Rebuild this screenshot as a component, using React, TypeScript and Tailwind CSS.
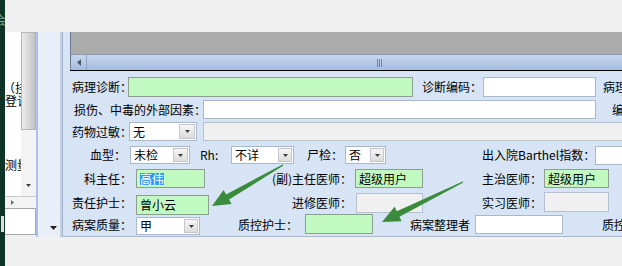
import type { ReactNode } from 'react';

type Tone = 'green' | 'white' | 'gray';

const toneCls: Record<Tone, string> = {
  green: 'bg-[#c1fac1] border-[#8d9e8d]',
  white: 'bg-white border-[#a9b9cd]',
  gray: 'bg-[#f0f0f0] border-[#b4c0cf]',
};

const Lbl = ({ c = '', children }: { c?: string; children: ReactNode }) => (
  <div className={`flex h-full shrink-0 items-center whitespace-nowrap ${c}`}>{children}</div>
);

const Field = ({ c, tone = 'white', children }: { c: string; tone?: Tone; children?: ReactNode }) => (
  <div className={`flex shrink-0 items-center border pl-[3px] whitespace-nowrap ${toneCls[tone]} ${c}`}>{children}</div>
);

const Combo = ({ c, value, btn = 'w-[15px]' }: { c: string; value: string; btn?: string }) => (
  <div className={`flex shrink-0 items-stretch border border-[#a9b9cd] bg-white ${c}`}>
    <div className="flex flex-1 items-center pl-[3px]">{value}</div>
    <div className={`my-[1px] mr-[1px] flex items-center justify-center border border-[#c4c8ce] bg-linear-to-b from-[#f6f6f6] to-[#dcdcdc] ${btn}`}>
      <svg width="5" height="3" viewBox="0 0 5 3">
        <path d="M0 0h5L2.5 3z" fill="#3c3c3c" />
      </svg>
    </div>
  </div>
);

const LeftPanel = () => (
  <div className="flex w-[31px] shrink-0 flex-col">
    <div className="flex h-[164px]">
      <div className="w-[16px] overflow-hidden bg-white leading-[13px]">
        <div className="mt-[49px] -ml-[2px] whitespace-nowrap">（挂</div>
        <div className="whitespace-nowrap">登记</div>
        <div className="mt-[51px] whitespace-nowrap">测量</div>
      </div>
      <div className="flex w-[15px] flex-col bg-[#f3f3f3]">
        <div className="h-[98px] border border-[#b5b5b5] bg-linear-to-r from-[#ececec] to-[#c2c2c2]" />
        <div className="flex-1" />
        <div className="flex h-[12px] items-start justify-center pb-[6px]">
          <svg width="5" height="3" viewBox="0 0 5 3">
            <path d="M0 0h5L2.5 3z" fill="#3c3c3c" />
          </svg>
        </div>
      </div>
    </div>
    <div className="flex h-[12px] items-center border-t border-[#c8c8c8] bg-[#f3f3f3] pl-[6px]">
      <svg width="3" height="5" viewBox="0 0 3 5">
        <path d="M0 0v5L3 2.5z" fill="#6a6a6a" />
      </svg>
    </div>
    <div className="h-[27px] border-t border-r border-b border-[#a8a8a8] bg-white" />
  </div>
);

const Form = () => (
  <div className="flex flex-1 flex-col border-b border-[#a7b7cc]">
    <div className="mt-[6px] flex h-[20px]">
      <Lbl c="ml-[9px] w-[56px]">病理诊断：</Lbl>
      <Field tone="green" c="h-[20px] w-[285px]" />
      <Lbl c="ml-[9px] w-[61px]">诊断编码：</Lbl>
      <Field c="h-[20px] w-[113px]" />
      <Lbl c="ml-[7px]">病理号：</Lbl>
    </div>

    <div className="mt-[3px] flex h-[19px]">
      <Lbl c="ml-[11px] w-[129px]">损伤、中毒的外部因素：</Lbl>
      <Field c="h-[19px] w-[393px]" />
      <Lbl c="ml-[16px]">编码：</Lbl>
    </div>

    <div className="mt-[3px] flex h-[19px]">
      <Lbl c="ml-[9px] w-[57px]">药物过敏：</Lbl>
      <Combo c="h-[19px] w-[68px]" value="无" btn="w-[16px]" />
      <Field tone="gray" c="ml-[6px] h-[19px] w-[430px]" />
    </div>

    <div className="mt-[5px] flex h-[18px]">
      <Lbl c="ml-[27px] w-[40px]">血型：</Lbl>
      <Combo c="h-[18px] w-[60px]" value="未检" />
      <Lbl c="ml-[10px] w-[31px]">Rh:</Lbl>
      <Combo c="h-[18px] w-[63px]" value="不详" btn="w-[14px]" />
      <Lbl c="ml-[13px] w-[38px]">尸检：</Lbl>
      <Combo c="h-[18px] w-[41px]" value="否" btn="w-[14px]" />
      <Lbl c="ml-[96px] w-[113px]">出入院Barthel指数：</Lbl>
      <Field c="h-[19px] w-[40px]" />
    </div>

    <div className="mt-[5px] flex h-[19px]">
      <Lbl c="ml-[21px] w-[52px]">科主任：</Lbl>
      <Field tone="green" c="h-[19px] w-[69px]">
        <span className="bg-[#3399ff] text-white">高伟</span>
      </Field>
      <Lbl c="ml-[67px] w-[83px]">(副)主任医师：</Lbl>
      <Field tone="green" c="h-[19px] w-[68px]">超级用户</Field>
      <Lbl c="ml-[59px] w-[62px]">主治医师：</Lbl>
      <Field tone="green" c="h-[19px] w-[65px]">超级用户</Field>
    </div>

    <div className="mt-[4px] flex h-[22px] items-start">
      <Lbl c="ml-[9px] w-[64px]">责任护士：</Lbl>
      <Field tone="green" c="mt-[3px] h-[20px] w-[73px]">曾小云</Field>
      <Lbl c="ml-[83px] w-[64px]">进修医师：</Lbl>
      <Field tone="gray" c="mt-[1px] h-[20px] w-[67px]" />
      <Lbl c="ml-[59px] w-[62px]">实习医师：</Lbl>
      <Field tone="gray" c="h-[20px] w-[65px]" />
    </div>

    <div className="flex h-[21px] items-start">
      <Lbl c="ml-[9px] w-[64px]">病案质量：</Lbl>
      <Combo c="mt-[3px] h-[18px] w-[64px]" value="甲" btn="w-[14px]" />
      <Lbl c="ml-[38px] w-[67px]">质控护士：</Lbl>
      <Field tone="green" c="h-[20px] w-[68px]" />
      <Lbl c="ml-[37px] w-[65px]">病案整理者</Lbl>
      <Field c="mt-[1px] h-[19px] w-[88px]" />
      <Lbl c="ml-[39px]">质控医师：</Lbl>
    </div>
  </div>
);

export default function App() {
  return (
    <div className="relative flex h-[266px] w-[622px] overflow-hidden bg-[#f0f0f0] font-['Noto_Sans_CJK_SC',sans-serif] text-[12px] leading-none text-black">
      {/* left dark strip */}
      <div className="flex w-[5px] shrink-0 flex-col overflow-hidden bg-[#0d3426]">
        <div className="mt-[14px] -ml-[6px] text-[12px] text-[#7fa595]">会</div>
        <div className="mt-[190px] ml-[1px] h-[16px] w-[3px] bg-[#dcdcdc]" />
      </div>

      <div className="flex flex-1 flex-col">
        <div className="h-[32px] shrink-0" />

        <div className="flex h-[205px] shrink-0">
          <LeftPanel />

          <div className="flex w-[26px] shrink-0 flex-col items-end justify-end border-r-2 border-l-2 border-r-[#c5cedb] border-l-[#a9c1e6] bg-[#e9eff9] pr-[3px] pb-[7px]">
            <svg width="7" height="4" viewBox="0 0 7 4">
              <path d="M0 0h7L3.5 4z" fill="#1e1e1e" />
            </svg>
          </div>

          <div className="flex flex-1 flex-col overflow-hidden border-l border-[#a0b4d0] bg-[#d7e4f5]">
            <div className="ml-[7px] flex h-[38px] flex-col border-l border-[#6a7a8c]">
              <div className="h-[22px] bg-[#ababab]" />
              <div className="flex h-[16px] items-stretch border-t border-[#8e9aab] bg-linear-to-b from-[#c6d6ee] to-[#a6bddd]">
                <div className="flex w-[16px] items-center justify-center border-r border-[#8ea4c4]">
                  <svg width="4" height="7" viewBox="0 0 4 7">
                    <path d="M4 0v7L0 3.5z" fill="#4f5a68" />
                  </svg>
                </div>
                <div className="ml-[290px] flex items-center gap-[1px]">
                  <div className="h-[8px] w-px bg-[#6f86a8]" />
                  <div className="h-[8px] w-px bg-[#6f86a8]" />
                  <div className="h-[8px] w-px bg-[#6f86a8]" />
                </div>
              </div>
            </div>
            <div className="ml-[7px] h-px bg-black" />
            <Form />
          </div>
        </div>

        <div className="flex-1" />
      </div>

      {/* green annotation arrows */}
      <svg className="pointer-events-none absolute inset-0" width="622" height="266" viewBox="0 0 622 266">
        <polygon
          points="212,206 231.6,203.9 229.1,199.6 283.4,165.6 282.6,164.4 226.1,194.4 223.6,190"
          fill="#3a8c3c"
        />
        <polygon
          points="382,222 401.6,221.2 399.4,216.7 463.3,182.6 462.7,181.4 396.8,211.3 394.6,206.8"
          fill="#3a8c3c"
        />
      </svg>
    </div>
  );
}
